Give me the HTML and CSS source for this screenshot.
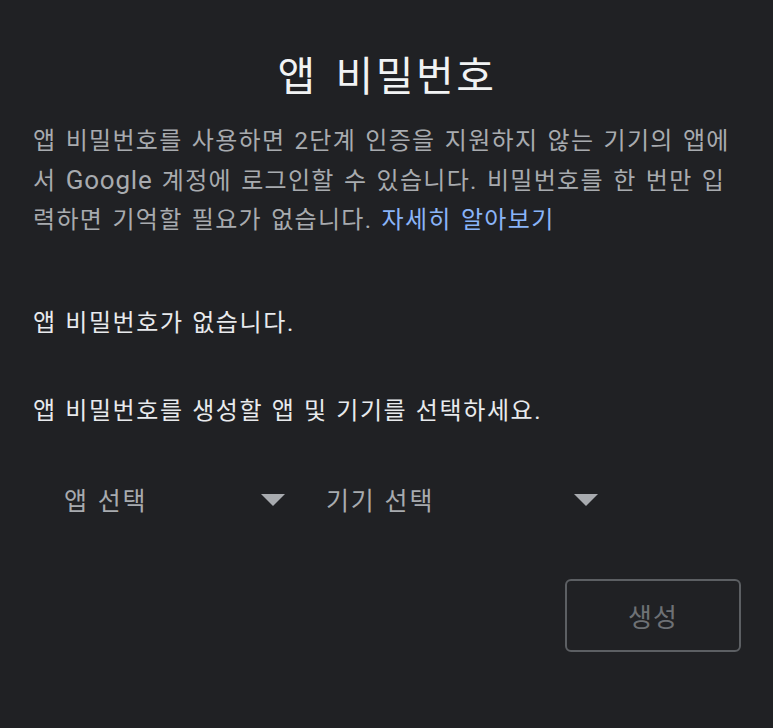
FILE: index.html
```html
<!DOCTYPE html>
<html lang="ko">
<head>
<meta charset="utf-8">
<title>앱 비밀번호</title>
<link rel="stylesheet" href="styles.css">
</head>
<body>
<main class="page">
  <h1 class="title">앱 비밀번호</h1>
  <p class="desc">앱 비밀번호를 사용하면 2단계 인증을 지원하지 않는 기기의 앱에서 <span class="latin">Google</span> 계정에 로그인할 수 있습니다. 비밀번호를 한 번만 입력하면 기억할 필요가 없습니다. <a class="link" href="#">자세히 알아보기</a></p>
  <p class="stmt stmt-first">앱 비밀번호가 없습니다.</p>
  <p class="stmt stmt-second">앱 비밀번호를 생성할 앱 및 기기를 선택하세요.</p>
  <div class="selects">
    <div class="select select-app">
      <span class="select-label">앱 선택</span>
      <span class="caret"></span>
    </div>
    <div class="select select-device">
      <span class="select-label">기기 선택</span>
      <span class="caret"></span>
    </div>
  </div>
  <div class="actions">
    <button class="btn" type="button" disabled>생성</button>
  </div>
</main>
</body>
</html>
```
FILE: styles.css
```css
html, body {
  margin: 0;
  padding: 0;
  background: #202124;
  height: 100%;
}

body {
  font-family: Roboto, "Noto Sans CJK KR", "Noto Sans", sans-serif;
  color: #e8eaed;
}

.page {
  padding: 52px 32px 0 33px;
  display: flex;
  flex-direction: column;
}

.title {
  margin: 0;
  font-size: 41px;
  font-weight: 400;
  line-height: 50px;
  text-align: center;
  letter-spacing: 2.5px;
  word-spacing: 5px;
  color: #f1f3f4;
}

.desc {
  margin: 20px 6px 0 0;
  font-size: 24px;
  line-height: 39.5px;
  color: #a8abaf;
  letter-spacing: 1.3px;
  word-spacing: 2px;
}

.latin {
  font-size: 26px;
  line-height: 1;
  letter-spacing: 0.8px;
}

.link {
  color: #8ab4f8;
  text-decoration: none;
}

.stmt {
  margin: 0;
  font-size: 24px;
  line-height: 39px;
  color: #e8eaed;
  letter-spacing: 1.6px;
  word-spacing: 1px;
}

.stmt-first {
  margin-top: 63px;
}

.stmt-second {
  margin-top: 49px;
}

.selects {
  margin-top: 48px;
  padding-left: 31px;
  display: flex;
  gap: 41px;
  height: 40px;
  align-items: center;
}

.select {
  display: flex;
  align-items: center;
  justify-content: space-between;
  font-size: 25px;
  color: #a8abaf;
  letter-spacing: 1.8px;
  word-spacing: 1px;
}

.select-app {
  width: 221px;
}

.select-device {
  width: 272px;
}

.caret {
  width: 0;
  height: 0;
  border-left: 12px solid transparent;
  border-right: 12px solid transparent;
  border-top: 12px solid #a8abaf;
  margin-top: 2px;
}

.actions {
  margin-top: 60px;
  display: flex;
  justify-content: flex-end;
}

.btn {
  width: 176px;
  height: 73px;
  box-sizing: border-box;
  border: 2px solid #5c5f63;
  border-radius: 6px;
  background: transparent;
  color: #6e7175;
  font-family: Roboto, "Noto Sans CJK KR", sans-serif;
  font-size: 26px;
  letter-spacing: 1px;
  padding: 0;
}
```
